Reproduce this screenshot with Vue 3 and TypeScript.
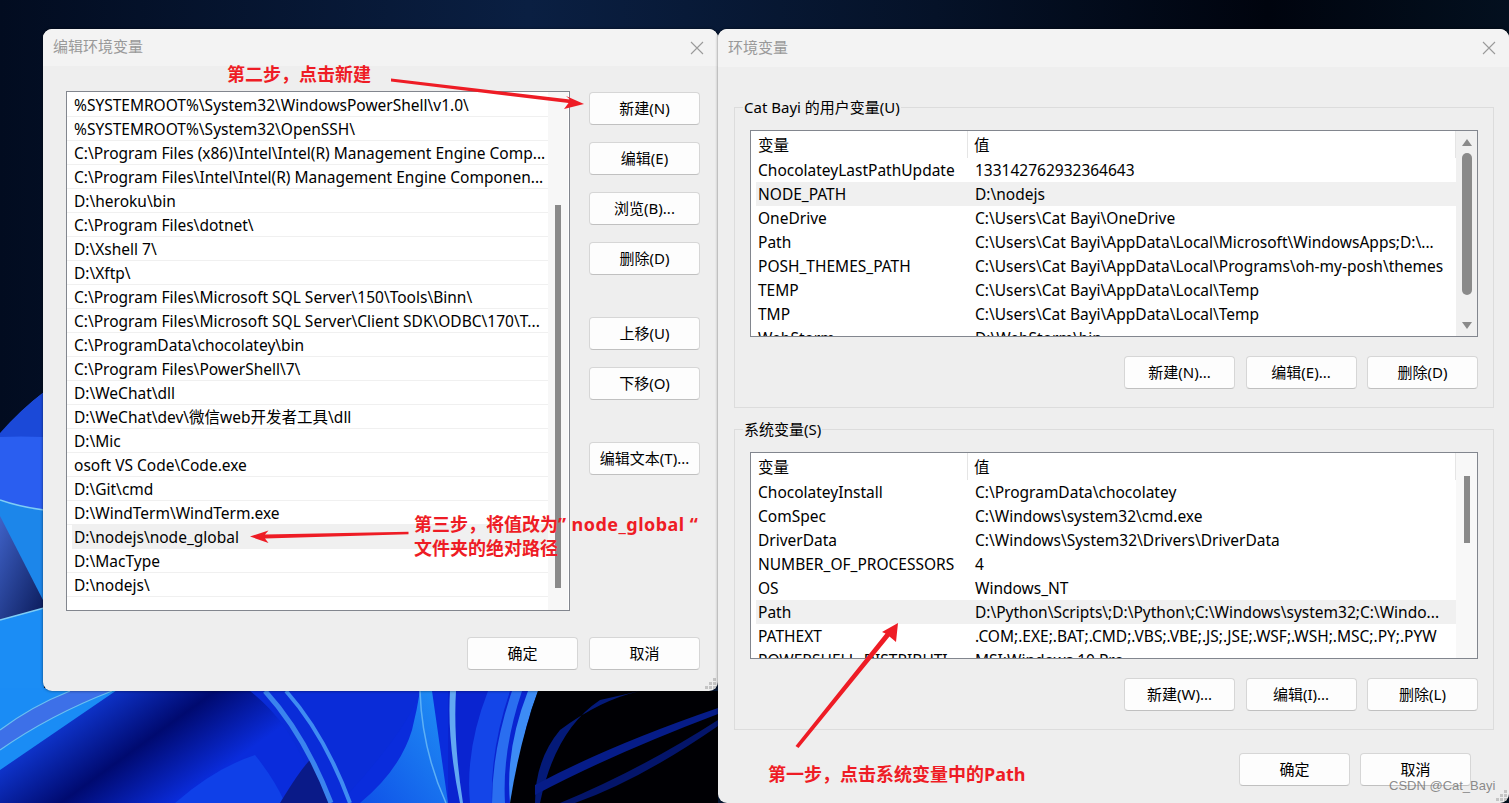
<template>
  <div class="desktop">
    <svg class="wallpaper" viewBox="0 0 1509 803" preserveAspectRatio="none">
      <defs>
        <linearGradient id="sky" x1="0" y1="0" x2="1" y2="0">
          <stop offset="0" stop-color="#020c20" />
          <stop offset="0.35" stop-color="#0a1f42" />
          <stop offset="0.62" stop-color="#051228" />
          <stop offset="0.84" stop-color="#00040e" />
          <stop offset="1" stop-color="#03101f" />
        </linearGradient>
        <linearGradient id="base" x1="0" y1="0" x2="1" y2="0.3">
          <stop offset="0" stop-color="#1a8cf5" />
          <stop offset="0.12" stop-color="#1445f0" />
          <stop offset="0.38" stop-color="#000a70" />
          <stop offset="0.58" stop-color="#0a2cdc" />
          <stop offset="1" stop-color="#0a2cdc" />
        </linearGradient>
        <linearGradient id="petal" x1="0" y1="1" x2="1" y2="0">
          <stop offset="0" stop-color="#0f52e8" />
          <stop offset="1" stop-color="#2090f5" />
        </linearGradient>
        <linearGradient id="shade" x1="0" y1="0" x2="1" y2="1">
          <stop offset="0" stop-color="#3f62c8" />
          <stop offset="1" stop-color="#0a1a58" />
        </linearGradient>
      </defs>
      <rect width="1509" height="803" fill="url(#sky)" />
      <!-- left strip of the bloom -->
      <path d="M0 435 Q20 410 44 392 L44 700 L0 700Z" fill="#2a5ef0" />
      <path d="M0 433 Q20 410 44 392 L44 437 Q20 436 0 437Z" fill="#1b49d8" />
      <path d="M0 500 Q20 507 44 510 L44 625 L0 625Z" fill="#1c86ea" />
      <path d="M0 516 L44 602 L44 608 L0 620Z" fill="url(#shade)" />
      <path d="M0 620 L44 608 L44 700 L0 700Z" fill="#1b8df5" />
      <path d="M0 500 Q20 507 44 510" fill="none" stroke="#7fcdf5" stroke-width="1.4" />
      <path d="M0 620 L44 608" fill="none" stroke="#7fcdf5" stroke-width="1.4" />
      <!-- bottom band -->
      <rect x="0" y="688" width="530" height="115" fill="url(#base)" />
      <path d="M0 688 H120 L0 770Z" fill="#1a8cf5" />
      <path d="M0 730 Q32 706 70 691 L112 691 Q50 715 0 750Z" fill="#3d70e8" />
      <path d="M0 730 Q32 706 70 691" fill="none" stroke="#6cc0f0" stroke-width="1.2" />
      <path d="M0 750 Q50 715 112 691" fill="none" stroke="#6cc0f0" stroke-width="1.2" />
      <path d="M175 803 Q215 768 255 755 Q275 780 285 803Z" fill="#0f40e8" />
      <path d="M250 691 H420 Q412 720 365 775 L340 803 L318 803 Q300 730 250 691Z" fill="#0a2cd8" />
      <path d="M280 803 Q300 770 310 760 L330 803Z" fill="#0a1a88" />
      <path d="M265 691 Q305 735 331 803" fill="none" stroke="#3a84ee" stroke-width="5" />
      <path d="M286 691 Q325 735 350 803" fill="none" stroke="#3f8cf2" stroke-width="4" />
      <path d="M360 803 Q400 770 412 730 Q417 710 420 691 L432 691 L448 803Z" fill="url(#petal)" />
      <path d="M420 691 Q422 750 446 803" fill="none" stroke="#5db0f5" stroke-width="1.5" />
      <path d="M448 691 H530 V803 H448Z" fill="#0a24d0" />
      <path d="M450 691 Q447 740 460 803 L463 803 Q453 740 456 691Z" fill="#62a8f2" />
      <path d="M488 691 Q465 750 470 803 L492 803 Q490 750 510 691Z" fill="#1445e8" />
      <path d="M512 691 Q492 750 492 803 L505 803 Q502 750 522 691Z" fill="#2a6ef0" />
      <path d="M528 691 Q505 750 510 803 L520 803 Q515 750 538 691Z" fill="#3d8cf5" />
      <path d="M538 691 H718 V803 H510 Q520 740 538 691Z" fill="#000004" />
      <path d="M535 803 Q535 760 560 730 Q600 700 640 691 L600 700 Q555 730 540 803Z" fill="#041a78" />
      <path d="M535 785 Q610 745 718 708 L718 714 Q610 755 535 795Z" fill="#061c88" />
      <path d="M560 803 Q640 770 718 720 L718 726 Q640 780 575 803Z" fill="#04156a" />
    </svg>

    <!-- edit window -->
    <section class="window edit-window">
      <header class="titlebar">
        <span>编辑环境变量</span>
        <svg class="close" viewBox="0 0 14 14"><path d="M1 1 13 13M13 1 1 13" /></svg>
      </header>
      <div class="edit-body">
        <div class="edit-main">
          <div class="path-list">
            <div class="path-rows">
              <div
                v-for="(p, i) in pathRows"
                :key="i"
                class="path-row"
                :class="{ selected: p === 'D:\\nodejs\\node_global' }"
              >
                <span>{{ p }}</span>
              </div>
            </div>
            <div class="path-scroll"><div class="path-thumb"></div></div>
          </div>
          <div class="side-buttons">
            <button v-for="b in sideButtons" :key="b.label" class="btn" :class="b.cls">{{ b.label }}</button>
          </div>
        </div>
        <div class="footer">
          <button class="btn">确定</button>
          <button class="btn">取消</button>
        </div>
      </div>
      <svg class="grip" viewBox="0 0 12 12"><path d="M8 0h3v3H8zM4 4h3v3H4zM8 4h3v3H8zM0 8h3v3H0zM4 8h3v3H4zM8 8h3v3H8z" /></svg>
    </section>

    <!-- env vars window -->
    <section class="window env-window">
      <header class="titlebar env-title">
        <span>环境变量</span>
        <svg class="close" viewBox="0 0 14 14"><path d="M1 1 13 13M13 1 1 13" /></svg>
      </header>
      <div class="env-body">
        <fieldset v-for="g in groups" :key="g.legend" class="group">
          <legend>{{ g.legend }}</legend>
          <div class="var-list">
            <div class="var-table">
              <div class="var-head">
                <div class="col-name">变量</div>
                <div class="col-value">值</div>
              </div>
              <div
                v-for="r in g.rows"
                :key="r[0]"
                class="var-row"
                :class="{ selected: r[0] === g.selected }"
              >
                <div class="col-name">{{ r[0] }}</div>
                <div class="col-value">{{ r[1] }}</div>
              </div>
            </div>
            <div class="var-scroll" :class="{ active: g.active }">
              <i v-if="g.active" class="up"></i>
              <div class="var-thumb"></div>
              <i v-if="g.active" class="down"></i>
            </div>
          </div>
          <div class="group-buttons">
            <button v-for="b in g.buttons" :key="b" class="btn">{{ b }}</button>
          </div>
        </fieldset>
        <div class="footer env-footer">
          <button class="btn">确定</button>
          <button class="btn">取消</button>
        </div>
      </div>
      <svg class="grip grip-env" viewBox="0 0 12 12"><path d="M8 0h3v3H8zM4 4h3v3H4zM8 4h3v3H8zM0 8h3v3H0zM4 8h3v3H4zM8 8h3v3H8z" /></svg>
    </section>

    <!-- red notes drawn over the screenshot -->
    <svg class="arrows" viewBox="0 0 1509 803">
      <polygon points="391,78.5 570,99.5 566,96 584,104 564,109 568.5,103 391,81.5" />
      <polygon points="408.5,531.8 265,534.5 268.5,530.5 250,536.5 268.5,543 265,538.5 408.5,534.2" />
      <polygon points="795.5,746 885.5,633.5 882,632 898,623 896,642 889.5,636.5 798.5,748" />
    </svg>
    <div class="note note-new">第二步，点击新建</div>
    <div class="note note-value">第三步，将值改为<span class="note-latin">” node_global “</span><br />文件夹的绝对路径</div>
    <div class="note note-path">第一步，点击系统变量中的Path</div>
    <div class="watermark">CSDN @Cat_Bayi</div>
  </div>
</template>

<script setup lang="ts">
interface VarGroup {
  legend: string
  selected: string
  active: boolean
  rows: [string, string][]
  buttons: string[]
}

const pathRows: string[] = [
  '%SYSTEMROOT%\\System32\\WindowsPowerShell\\v1.0\\',
  '%SYSTEMROOT%\\System32\\OpenSSH\\',
  'C:\\Program Files (x86)\\Intel\\Intel(R) Management Engine Comp...',
  'C:\\Program Files\\Intel\\Intel(R) Management Engine Componen...',
  'D:\\heroku\\bin',
  'C:\\Program Files\\dotnet\\',
  'D:\\Xshell 7\\',
  'D:\\Xftp\\',
  'C:\\Program Files\\Microsoft SQL Server\\150\\Tools\\Binn\\',
  'C:\\Program Files\\Microsoft SQL Server\\Client SDK\\ODBC\\170\\T...',
  'C:\\ProgramData\\chocolatey\\bin',
  'C:\\Program Files\\PowerShell\\7\\',
  'D:\\WeChat\\dll',
  'D:\\WeChat\\dev\\微信web开发者工具\\dll',
  'D:\\Mic',
  'osoft VS Code\\Code.exe',
  'D:\\Git\\cmd',
  'D:\\WindTerm\\WindTerm.exe',
  'D:\\nodejs\\node_global',
  'D:\\MacType',
  'D:\\nodejs\\',
]

const sideButtons = [
  { label: '新建(N)', cls: '' },
  { label: '编辑(E)', cls: '' },
  { label: '浏览(B)...', cls: '' },
  { label: '删除(D)', cls: '' },
  { label: '上移(U)', cls: 'gap-before' },
  { label: '下移(O)', cls: '' },
  { label: '编辑文本(T)...', cls: 'gap-before' },
]

const groups: VarGroup[] = [
  {
    legend: 'Cat Bayi 的用户变量(U)',
    selected: 'NODE_PATH',
    active: true,
    rows: [
      ['ChocolateyLastPathUpdate', '133142762932364643'],
      ['NODE_PATH', 'D:\\nodejs'],
      ['OneDrive', 'C:\\Users\\Cat Bayi\\OneDrive'],
      ['Path', 'C:\\Users\\Cat Bayi\\AppData\\Local\\Microsoft\\WindowsApps;D:\\...'],
      ['POSH_THEMES_PATH', 'C:\\Users\\Cat Bayi\\AppData\\Local\\Programs\\oh-my-posh\\themes'],
      ['TEMP', 'C:\\Users\\Cat Bayi\\AppData\\Local\\Temp'],
      ['TMP', 'C:\\Users\\Cat Bayi\\AppData\\Local\\Temp'],
      ['WebStorm', 'D:\\WebStorm\\bin'],
    ],
    buttons: ['新建(N)...', '编辑(E)...', '删除(D)'],
  },
  {
    legend: '系统变量(S)',
    selected: 'Path',
    active: false,
    rows: [
      ['ChocolateyInstall', 'C:\\ProgramData\\chocolatey'],
      ['ComSpec', 'C:\\Windows\\system32\\cmd.exe'],
      ['DriverData', 'C:\\Windows\\System32\\Drivers\\DriverData'],
      ['NUMBER_OF_PROCESSORS', '4'],
      ['OS', 'Windows_NT'],
      ['Path', 'D:\\Python\\Scripts\\;D:\\Python\\;C:\\Windows\\system32;C:\\Windo...'],
      ['PATHEXT', '.COM;.EXE;.BAT;.CMD;.VBS;.VBE;.JS;.JSE;.WSF;.WSH;.MSC;.PY;.PYW'],
      ['POWERSHELL_DISTRIBUTI', 'MSI:Windows 10 Pro'],
    ],
    buttons: ['新建(W)...', '编辑(I)...', '删除(L)'],
  },
]
</script>

<style scoped>
.desktop {
  position: relative;
  width: 1509px;
  height: 803px;
  overflow: hidden;
  font-family: "Noto Sans", "Noto Sans CJK SC", sans-serif;
  font-size: 15px;
  color: #000;
}
.wallpaper,
.arrows {
  position: absolute;
  left: 0;
  top: 0;
  width: 1509px;
  height: 803px;
}
.arrows polygon {
  fill: #ee1c25;
}

.window {
  position: absolute;
  background: #eeeeee;
  border-radius: 9px;
  box-shadow: 0 0 3px rgba(0, 0, 0, 0.55);
  overflow: hidden;
}
.edit-window {
  left: 43px;
  top: 29px;
  width: 675px;
  height: 662px;
}
.env-window {
  left: 718px;
  top: 29px;
  width: 791px;
  height: 774px;
}
.titlebar {
  display: flex;
  align-items: center;
  justify-content: space-between;
  height: 37px;
  padding: 0 14px 0 10px;
  background: #f3f3f3;
  color: #999;
}
.titlebar span {
  margin-bottom: 4px;
}
.env-title {
  height: 38px;
  padding-right: 13px;
}
.close {
  width: 14px;
  height: 14px;
}
.close path {
  stroke: #9a9a9a;
  stroke-width: 1.1;
  fill: none;
}

.edit-body {
  padding: 25px 18px 0 23px;
}
.edit-main {
  display: flex;
  gap: 19px;
}
.path-list {
  display: flex;
  width: 504px;
  height: 520px;
  background: #fff;
  border: 1px solid #82868e;
  box-sizing: border-box;
  font-size: 15.5px;
}
.path-rows {
  width: 481px;
  padding-top: 1px;
}
.path-row {
  height: 24px;
  box-sizing: border-box;
  line-height: 23px;
  padding: 1px 0 0 7px;
  border-bottom: 1px solid #f0f0f0;
  white-space: nowrap;
  overflow: hidden;
}
.path-row.selected {
  background: #f0f0f0;
  margin-left: 5px;
  padding-left: 2px;
}
.path-scroll {
  width: 20px;
  background: #f7f7f7;
  padding-top: 113px;
}
.path-thumb {
  width: 6px;
  height: 383px;
  margin-left: 7px;
  background: #8a8a8a;
}
.side-buttons {
  display: flex;
  flex-direction: column;
  gap: 17px;
  padding-top: 1px;
}
.gap-before {
  margin-top: 25px;
}

.btn {
  width: 111px;
  height: 33px;
  box-sizing: border-box;
  padding: 0 0 2px;
  background: #fdfdfd;
  border: 1px solid #d6d6d6;
  border-bottom-color: #c0c0c0;
  border-radius: 4px;
  font: inherit;
  color: #000;
  white-space: nowrap;
}
.footer {
  display: flex;
  justify-content: flex-end;
  gap: 11px;
  margin-top: 26px;
}

.env-body {
  padding: 30px 0 0 16px;
}
.group {
  margin: 0 15px 11px 0;
  padding: 0 15px 18px;
  border: 1px solid #dcdcdc;
  min-width: 0;
}
.group legend {
  margin-left: -7px;
  padding: 0 1px;
  line-height: 20px;
}
.var-list {
  display: flex;
  height: 207px;
  margin-top: 13px;
  background: #fff;
  border: 1px solid #82868e;
  box-sizing: border-box;
  font-size: 15.5px;
}
.var-table {
  width: 705px;
  padding-left: 5px;
  overflow: hidden;
}
.var-head {
  display: flex;
  height: 27px;
  line-height: 29px;
}
.var-head .col-name {
  border-right: 1px solid #e5e5e5;
  margin-right: -1px;
}
.var-head .col-value {
  border-right: 1px solid #e5e5e5;
}
.var-row {
  display: flex;
  height: 24px;
  line-height: 24px;
}
.var-row.selected {
  background: #f0f0f0;
}
.col-name {
  width: 212px;
  box-sizing: border-box;
  padding-left: 2px;
  white-space: nowrap;
  overflow: hidden;
}
.col-value {
  flex: 1;
  min-width: 0;
  padding-left: 7px;
  white-space: nowrap;
  overflow: hidden;
}
.var-scroll {
  display: flex;
  flex-direction: column;
  align-items: center;
  width: 21px;
  background: #f8f8f8;
  padding-top: 23px;
}
.var-scroll.active {
  background: #f0f0f0;
  padding-top: 8px;
}
.var-scroll .up,
.var-scroll .down {
  width: 0;
  height: 0;
  border-left: 5px solid transparent;
  border-right: 5px solid transparent;
}
.var-scroll .up {
  border-bottom: 7px solid #8a8a8a;
}
.var-scroll .down {
  border-top: 7px solid #8a8a8a;
  margin-top: 27px;
}
.var-thumb {
  width: 6px;
  height: 67px;
  background: #8a8a8a;
}
.var-scroll.active .var-thumb {
  width: 10px;
  height: 142px;
  margin-top: 7px;
  border-radius: 5px;
}
.group-buttons {
  display: flex;
  justify-content: flex-end;
  gap: 10.5px;
  margin-top: 19px;
}
.env-footer {
  gap: 10px;
  margin: 23px 38px 0 0;
}

.grip {
  position: absolute;
  right: 1px;
  bottom: 1px;
  width: 12px;
  height: 12px;
}
.grip path {
  fill: #c4c4c4;
}

.note {
  position: absolute;
  color: #ee1c25;
  font-weight: 700;
  font-size: 18px;
  line-height: 24px;
  white-space: nowrap;
}
.note-latin {
  letter-spacing: 0.45px;
}
.note-new {
  left: 227px;
  top: 62px;
}
.note-value {
  left: 414px;
  top: 512px;
}
.note-path {
  left: 768px;
  top: 762px;
}
.watermark {
  position: absolute;
  left: 1389px;
  top: 778px;
  font-family: "Liberation Sans", Arial, sans-serif;
  font-size: 13px;
  line-height: 16px;
  color: rgba(110, 110, 110, 0.8);
}
</style>
